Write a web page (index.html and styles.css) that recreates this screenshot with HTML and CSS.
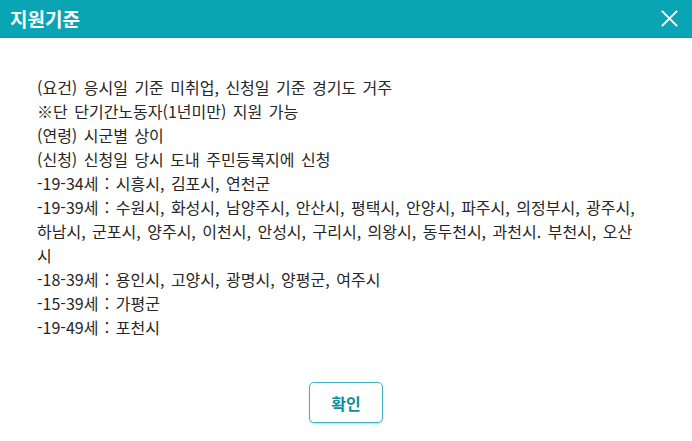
FILE: index.html
```html
<!DOCTYPE html>
<html lang="ko">
<head>
    <meta charset="UTF-8">
    <meta name="viewport" content="width=device-width, initial-scale=1.0">
    <title>지원기준</title>
    <link rel="stylesheet" href="styles.css">
</head>
<body>
    <div class="popup" role="dialog" aria-labelledby="popupTitle">
        <div class="popup-header">
            <h2 class="popup-title" id="popupTitle">지원기준</h2>
            <button class="popup-close" type="button" aria-label="닫기">
                <svg viewBox="0 0 20 20" fill="none" stroke="currentColor" stroke-width="2">
                    <path d="M2 2 L18 18 M18 2 L2 18"/>
                </svg>
            </button>
        </div>

        <div class="popup-body">
            <p>(요건) 응시일 기준 미취업, 신청일 기준 경기도 거주</p>
            <p>※단 단기간노동자(1년미만) 지원 가능</p>
            <p>(연령) 시군별 상이</p>
            <p>(신청) 신청일 당시 도내 주민등록지에 신청</p>
            <p>-19-34세 : 시흥시, 김포시, 연천군</p>
            <p>-19-39세 : 수원시, 화성시, 남양주시, 안산시, 평택시, 안양시, 파주시, 의정부시, 광주시, 하남시, 군포시, 양주시, 이천시, 안성시, 구리시, 의왕시, 동두천시, 과천시. 부천시, 오산시</p>
            <p>-18-39세 : 용인시, 고양시, 광명시, 양평군, 여주시</p>
            <p>-15-39세 : 가평군</p>
            <p>-19-49세 : 포천시</p>
        </div>

        <div class="popup-footer">
            <button class="btn-confirm" type="button">확인</button>
        </div>
    </div>
</body>
</html>
```

FILE: styles.css
```css
* {
    margin: 0;
    padding: 0;
    box-sizing: border-box;
}

body {
    font-family: "Noto Sans CJK KR", "Noto Sans", sans-serif;
    background: white;
    color: #333;
}

.popup {
    width: 692px;
    min-height: 441px;
    background: white;
}

/* 상단 타이틀 바 */
.popup-header {
    display: flex;
    align-items: center;
    justify-content: space-between;
    height: 38px;
    padding: 0 13px 0 10px;
    background: #0aa5b4;
    border-bottom: 1px solid #17919c;
}

.popup-title {
    font-size: 19px;
    font-weight: 700;
    color: white;
}

.popup-close {
    display: flex;
    width: 19px;
    height: 19px;
    border: 0;
    background: none;
    color: white;
    cursor: pointer;
}

.popup-close svg {
    width: 19px;
    height: 19px;
}

.popup-body {
    padding: 37px 54px 0 37px;
    font-size: 16px;
    line-height: 24px;
    word-spacing: 2px;
    color: #262626;
}

.popup-footer {
    display: flex;
    justify-content: center;
    padding: 43px 0 20px;
}

.btn-confirm {
    width: 74px;
    height: 41px;
    font-family: inherit;
    font-size: 16px;
    font-weight: 700;
    color: #0a8e9b;
    background: white;
    border: 1px solid #3fb5c0;
    border-radius: 5px;
    box-shadow: 0 1px 2px rgba(10, 165, 180, 0.35);
    cursor: pointer;
}
```
